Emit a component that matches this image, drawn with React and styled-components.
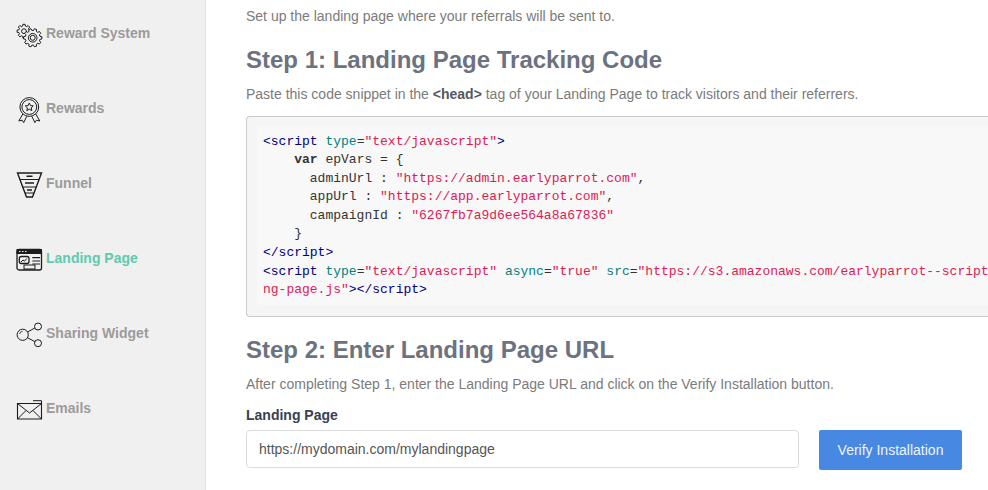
import React from "react";
import styled, { createGlobalStyle } from "styled-components";

const Global = createGlobalStyle`
  html, body { margin: 0; padding: 0; width: 988px; height: 490px; overflow: hidden; background: #fff; }
  body { font-family: "Liberation Sans", Arial, sans-serif; }
  * { box-sizing: border-box; }
`;

const Page = styled.div`
  display: flex;
  width: 988px;
  height: 490px;
  overflow: hidden;
`;

const Sidebar = styled.nav`
  flex: 0 0 206px;
  height: 490px;
  background: #f0f0f0;
  border-right: 1px solid #e2e2e2;
  padding-top: 5px;
  display: flex;
  flex-direction: column;
`;

const NavItem = styled.div`
  display: flex;
  align-items: center;
  height: 75px;
  padding: 0 0 19px 16px;
  gap: 4px;
  color: ${(p) => (p.$active ? "#62c9ae" : "#9b9b9b")};
  font-size: 14px;
  font-weight: 700;
`;

const IconBox = styled.svg`
  flex: 0 0 26px;
  width: 26px;
  height: 26px;
  margin-top: 3px;
  fill: none;
  stroke: #1c1c1c;
  stroke-width: 1;
  overflow: visible;
`;

const Main = styled.main`
  flex: 1;
  min-width: 0;
  padding: 7px 0 0 40px;
`;

const Intro = styled.p`
  margin: 0;
  font-size: 14px;
  line-height: 18px;
  color: #7b7b7b;
`;

const Heading = styled.h2`
  margin: ${(p) => p.$top}px 0 0;
  font-size: 24px;
  line-height: 30px;
  font-weight: 700;
  color: #6b7280;
`;

const Lead = styled.p`
  margin: ${(p) => p.$top}px 0 0;
  font-size: 14px;
  line-height: 18px;
  color: #7b7b7b;
  b { color: #55585e; }
`;

const CodeBox = styled.div`
  margin-top: 13px;
  width: 760px;
  height: 201px;
  background: #f5f5f5;
  border: 1px solid #cccccc;
  border-right: none;
  border-radius: 4px 0 0 4px;
  padding: 9px 0 0 10px;
  overflow: hidden;
`;

const Code = styled.pre`
  margin: 0;
  padding: 6.6px 0 0 6px;
  height: 179px;
  background: #f8f8f8;
  font-family: "Liberation Mono", "Courier New", monospace;
  font-size: 13px;
  line-height: 18.57px;
  color: #333;
  white-space: pre;
  overflow: hidden;
`;

const Tag = styled.span` color: #000080; `;
const Attr = styled.span` color: #008080; `;
const Str = styled.span` color: #dd1b55; `;
const Kw = styled.span` font-weight: 700; `;

const Label = styled.label`
  display: block;
  margin-top: 13px;
  font-size: 14px;
  line-height: 18px;
  font-weight: 700;
  color: #374151;
`;

const Row = styled.div`
  display: flex;
  gap: 20px;
  margin-top: 6px;
`;

const Input = styled.input`
  width: 553px;
  height: 38px;
  border: 1px solid #dcdcdc;
  border-radius: 4px;
  padding: 0 12px;
  font: 14px "Liberation Sans", Arial, sans-serif;
  color: #555;
  background: #fff;
`;

const Button = styled.button`
  width: 143px;
  height: 40px;
  border: none;
  border-radius: 2px;
  background: #4688e2;
  color: #f0f5fd;
  font: 14px "Liberation Sans", Arial, sans-serif;
`;

const gear = (cx, cy, ro, ri, n) => {
  const pts = [];
  const step = (Math.PI * 2) / n;
  for (let i = 0; i < n; i++) {
    const a = i * step;
    [[-0.32, ri], [-0.2, ro], [0.2, ro], [0.32, ri]].forEach(([f, r]) => {
      pts.push(`${(cx + r * Math.cos(a + f * step)).toFixed(2)} ${(cy + r * Math.sin(a + f * step)).toFixed(2)}`);
    });
  }
  return `M${pts.join("L")}Z`;
};

const Gears = () => (
  <IconBox viewBox="0 0 26 26">
    <path d={gear(8, 9.2, 7, 5.3, 8)} />
    <circle cx="8" cy="9.2" r="2.4" />
    <path d={gear(16.7, 15.8, 9.2, 7.4, 10)} fill="#f0f0f0" />
    <circle cx="16.7" cy="15.8" r="4.3" />
    <circle cx="16.7" cy="15.8" r="2.5" />
  </IconBox>
);

const Medal = () => (
  <IconBox viewBox="0 0 26 26">
    <circle cx="13.3" cy="10" r="9.4" />
    <circle cx="13.3" cy="10" r="7.4" />
    <path d="M13.3 6l1.2 2.6 2.8.3-2.1 1.9.6 2.8-2.5-1.4-2.5 1.4.6-2.8-2.1-1.9 2.8-.3z" />
    <path d="M6.8 17L2.8 24l3.4-.8 1.5 2.4 3-6.2M19.8 17l4 7-3.4-.8-1.5 2.4-3-6.2" />
  </IconBox>
);

const Funnel = () => (
  <IconBox viewBox="0 0 26 26">
    <path d="M1.5 1h24l-9 24h-6z" strokeWidth="1.4" />
    <path d="M4 7.5h19M6.5 15h14M9 21h9" />
    <path d="M10.5 4.3h6M9 11h9M11 18h5" strokeWidth="1.4" />
  </IconBox>
);

const Browser = () => (
  <IconBox viewBox="0 0 26 26">
    <rect x="1" y="2.5" width="24.5" height="20.5" rx="2" strokeWidth="1.3" />
    <rect x="1" y="2.5" width="24.5" height="4" fill="#1c1c1c" />
    <path d="M3 4.5h1.5M6 4.5h1.5M9 4.5h1.5" stroke="#f0f0f0" />
    <rect x="3.3" y="9.5" width="9.7" height="7" rx="2" strokeWidth="1.3" />
    <path d="M5 15l2-2 1.5 1.2 2.3-2.7" />
    <path d="M16.3 10.7h7.7M16.3 14h7.7M16.3 17h7.7" strokeWidth="1.2" />
    <rect x="8" y="18" width="11" height="4" fill="#f0f0f0" />
  </IconBox>
);

const Share = () => (
  <IconBox viewBox="0 0 26 26" strokeWidth="1.2">
    <circle cx="6.7" cy="12.8" r="5.6" />
    <circle cx="22" cy="4.5" r="3.5" />
    <circle cx="22" cy="21.2" r="3.5" />
    <path d="M11.5 10l7.4-4M11.5 15.8l7.4 3.8" />
    <path d="M3.6 12a3 3 0 0 1 3-2.6" strokeWidth=".8" />
  </IconBox>
);

const Mail = () => (
  <IconBox viewBox="0 0 26 26">
    <path d="M1.5 6.5h24V22h-24z" strokeWidth="1.1" />
    <path d="M1.5 6.5l12 9.5 12-9.5M1.5 22l8.5-8.5M25.5 22L17 13.5" />
    <path d="M17 3.7h8.5v2.8" />
  </IconBox>
);

const items = [
  ["Reward System", Gears],
  ["Rewards", Medal],
  ["Funnel", Funnel],
  ["Landing Page", Browser, true],
  ["Sharing Widget", Share],
  ["Emails", Mail],
];

export default function App() {
  return (
    <Page>
      <Global />
      <Sidebar>
        {items.map(([label, Icon, active]) => (
          <NavItem key={label} $active={active}>
            <Icon />
            <span>{label}</span>
          </NavItem>
        ))}
      </Sidebar>
      <Main>
        <Intro>Set up the landing page where your referrals will be sent to.</Intro>
        <Heading $top={20}>Step 1: Landing Page Tracking Code</Heading>
        <Lead $top={10}>
          Paste this code snippet in the <b>&lt;head&gt;</b> tag of your Landing Page to track visitors and their referrers.
        </Lead>
        <CodeBox>
          <Code>
            <Tag>&lt;script</Tag> <Attr>type</Attr>=<Str>"text/javascript"</Str><Tag>&gt;</Tag>{"\n"}
            {"    "}<Kw>var</Kw> epVars = {"{"}{"\n"}
            {"      "}adminUrl : <Str>"https://admin.earlyparrot.com"</Str>,{"\n"}
            {"      "}appUrl : <Str>"https://app.earlyparrot.com"</Str>,{"\n"}
            {"      "}campaignId : <Str>"6267fb7a9d6ee564a8a67836"</Str>{"\n"}
            {"    "}{"}"}{"\n"}
            <Tag>&lt;/script&gt;</Tag>{"\n"}
            <Tag>&lt;script</Tag> <Attr>type</Attr>=<Str>"text/javascript"</Str> <Attr>async</Attr>=<Str>"true"</Str> <Attr>src</Attr>=<Str>"https://s3.amazonaws.com/earlyparrot--scripts/landi</Str>{"\n"}
            <Str>ng-page.js"</Str><Tag>&gt;&lt;/script&gt;</Tag>
          </Code>
        </CodeBox>
        <Heading $top={18}>Step 2: Enter Landing Page URL</Heading>
        <Lead $top={10}>After completing Step 1, enter the Landing Page URL and click on the Verify Installation button.</Lead>
        <Label>Landing Page</Label>
        <Row>
          <Input readOnly value="https://mydomain.com/mylandingpage" />
          <Button>Verify Installation</Button>
        </Row>
      </Main>
    </Page>
  );
}
